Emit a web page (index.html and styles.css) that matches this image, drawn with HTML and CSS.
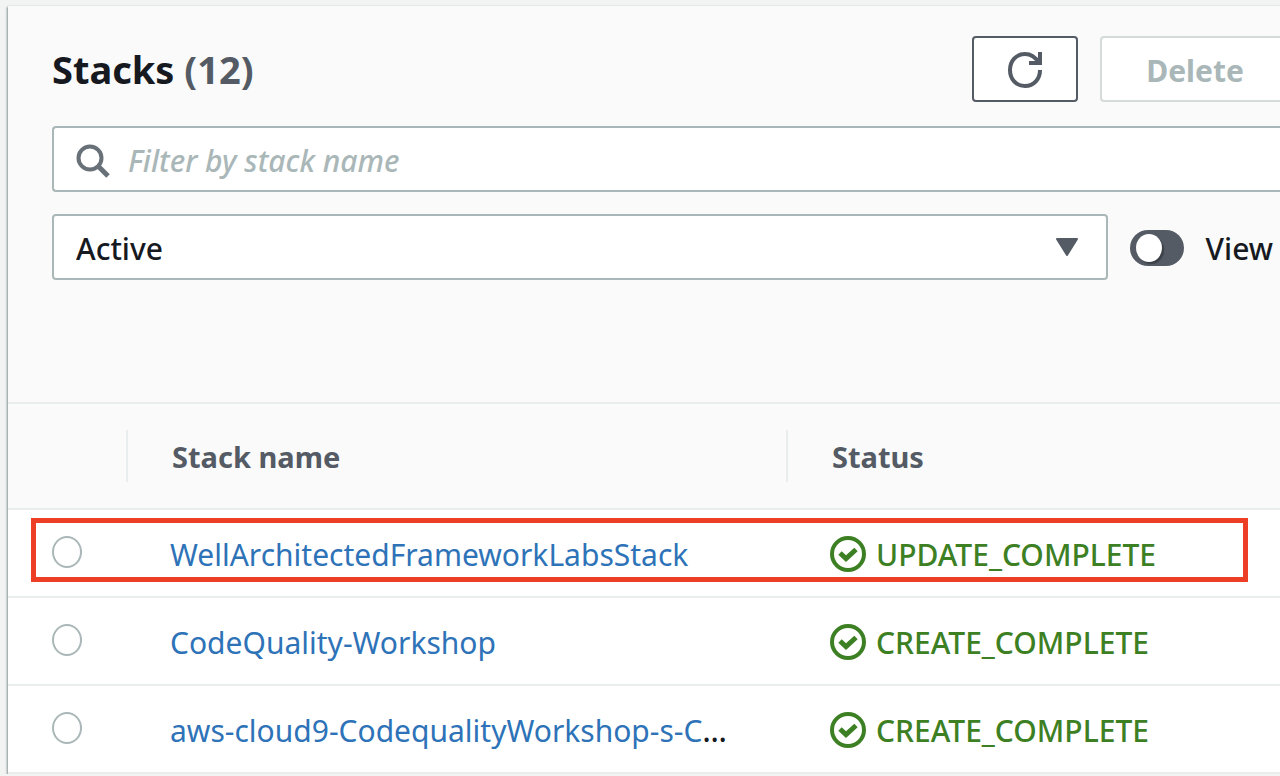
FILE: index.html
```html
<!DOCTYPE html>
<html lang="en">
<head>
<meta charset="utf-8">
<title>Stacks</title>
<link rel="stylesheet" href="styles.css">
</head>
<body>
<main class="panel">
  <header class="panel-header">
    <div class="title-row">
      <h1 class="title">Stacks <span class="count">(12)</span></h1>
      <div class="actions">
        <button class="button button-refresh" type="button" aria-label="Refresh">
          <svg class="icon" width="36" height="36" viewBox="0 0 36 36" fill="none" stroke="currentColor" stroke-width="4">
            <path d="M33 18C33 27 27 34 18 34C9 34 3 27 3 18C3 9 9 2 18 2C25 2 29 6 32 11"/>
            <path d="M33 0V11H22"/>
          </svg>
        </button>
        <button class="button button-delete" type="button" disabled>Delete</button>
      </div>
    </div>
    <div class="search">
      <svg class="search-icon" width="34" height="34" viewBox="0 0 34 34" fill="none" stroke="currentColor" stroke-width="4">
        <circle cx="14" cy="14" r="11.5"/>
        <path stroke-width="5" d="M22 22L32 32"/>
      </svg>
      <input class="search-input" type="text" placeholder="Filter by stack name" aria-label="Filter by stack name">
    </div>
    <div class="filter-row">
      <div class="select-wrap">
        <select class="select" aria-label="Stack status">
          <option>Active</option>
        </select>
        <svg class="caret" width="22" height="18" viewBox="0 0 22 18" fill="currentColor" stroke="currentColor" stroke-width="2" stroke-linejoin="round">
          <path d="M1 1H21L11 17Z"/>
        </svg>
      </div>
      <label class="toggle-label"><input class="toggle" type="checkbox">View</label>
    </div>
  </header>
  <table class="table">
    <colgroup><col class="col-radio"><col class="col-name"><col></colgroup>
    <thead>
      <tr><th scope="col" aria-label="Selection"></th><th scope="col">Stack name</th><th scope="col">Status</th></tr>
    </thead>
    <tbody>
      <tr class="highlighted">
        <td><input class="radio" type="radio" name="stack" aria-label="WellArchitectedFrameworkLabsStack"></td>
        <td><a class="link" href="#">WellArchitectedFrameworkLabsStack</a></td>
        <td><span class="status"><svg class="status-icon" width="36" height="36" viewBox="0 0 36 36" fill="none" stroke="currentColor" stroke-width="4"><circle cx="18" cy="18" r="16"/><path stroke-width="5" d="M10 17L16 22.5L26 13.5"/></svg>UPDATE_COMPLETE</span></td>
      </tr>
      <tr>
        <td><input class="radio" type="radio" name="stack" aria-label="CodeQuality-Workshop"></td>
        <td><a class="link" href="#">CodeQuality-Workshop</a></td>
        <td><span class="status"><svg class="status-icon" width="36" height="36" viewBox="0 0 36 36" fill="none" stroke="currentColor" stroke-width="4"><circle cx="18" cy="18" r="16"/><path stroke-width="5" d="M10 17L16 22.5L26 13.5"/></svg>CREATE_COMPLETE</span></td>
      </tr>
      <tr>
        <td><input class="radio" type="radio" name="stack" aria-label="aws-cloud9-CodequalityWorkshop-s-C"></td>
        <td><a class="link" href="#">aws-cloud9-CodequalityWorkshop-s-C</a>…</td>
        <td><span class="status"><svg class="status-icon" width="36" height="36" viewBox="0 0 36 36" fill="none" stroke="currentColor" stroke-width="4"><circle cx="18" cy="18" r="16"/><path stroke-width="5" d="M10 17L16 22.5L26 13.5"/></svg>CREATE_COMPLETE</span></td>
      </tr>
    </tbody>
  </table>
</main>
</body>
</html>
```
FILE: styles.css
```css
* {
  box-sizing: border-box;
}

body {
  margin: 0;
  padding: 6px 0 0 8px;
  background: #f2f3f3;
  color: #16191f;
  font-family: "Noto Sans", "Open Sans", sans-serif;
  font-size: 30px;
  font-weight: 500;
  line-height: 44px;
}

button,
input,
select {
  font: inherit;
  color: inherit;
}

.panel {
  background: #fff;
  box-shadow: -1px 1px 2px #879596, 0 -1px 1px #eaeded;
}

.panel-header {
  display: flex;
  flex-direction: column;
  gap: 22px;
  padding: 30px 0 122px 44px;
  background: #fafafa;
  border-bottom: 2px solid #eaeded;
}

.title-row {
  display: flex;
  align-items: center;
  justify-content: space-between;
  margin-bottom: 2px;
}

.title {
  margin: 0;
  font-size: 38px;
  font-weight: 700;
}

.count {
  color: #545b64;
}

.actions {
  display: flex;
  gap: 22px;
}

.button {
  display: flex;
  align-items: center;
  justify-content: center;
  height: 66px;
  background: #fff;
  border: 2px solid #545b64;
  border-radius: 4px;
  color: #545b64;
  font-weight: 700;
}

.button-refresh {
  width: 106px;
  padding: 2px 0 0;
}

.button-delete {
  width: 180px;
  padding: 4px 36px 0 44px;
  border-color: #d5dbdb;
  border-right: 0;
  border-radius: 4px 0 0 4px;
  color: #aab7b8;
}

.icon {
  display: block;
  flex: none;
}

.search {
  display: flex;
  align-items: center;
  gap: 18px;
  height: 66px;
  padding: 4px 0 0 22px;
  background: #fff;
  border: 2px solid #aab7b8;
  border-right: 0;
  border-radius: 4px 0 0 4px;
}

.search-icon {
  flex: none;
  color: #687078;
}

.search-input {
  flex: 1;
  min-width: 0;
  padding: 0;
  border: 0;
  outline: 0;
  background: none;
}

.search-input::placeholder {
  color: #aab7b8;
  font-style: italic;
  opacity: 1;
}

.filter-row {
  display: flex;
  align-items: center;
  gap: 22px;
  padding-right: 7px;
}

.select-wrap {
  position: relative;
  flex: 1;
}

.select {
  display: block;
  width: 100%;
  height: 66px;
  padding: 4px 60px 0 22px;
  appearance: none;
  background: #fff;
  border: 2px solid #aab7b8;
  border-radius: 4px;
}

.caret {
  position: absolute;
  top: 24px;
  right: 30px;
  color: #545b64;
  pointer-events: none;
}

.toggle-label {
  display: flex;
  align-items: center;
  gap: 22px;
  padding-top: 4px;
}

.toggle {
  display: flex;
  align-items: center;
  width: 54px;
  height: 36px;
  margin: 0 0 2px;
  padding: 0 6px;
  appearance: none;
  background: #545b64;
  border-radius: 18px;
}

.toggle::before {
  content: "";
  width: 26px;
  height: 28px;
  background: #fff;
  border-radius: 50%;
  box-shadow: 2px 2px 1px #3b4047;
}

.table {
  width: 100%;
  table-layout: fixed;
  border-collapse: separate;
  border-spacing: 0;
}

.col-radio {
  width: 120px;
}

.col-name {
  width: 660px;
}

th {
  position: relative;
  height: 106px;
  padding: 2px 44px 0;
  background: #fafafa;
  border-bottom: 2px solid #eaeded;
  color: #545b64;
  font-size: 29px;
  font-weight: 700;
  text-align: left;
}

th:not(:last-child)::after {
  content: "";
  position: absolute;
  top: 26px;
  bottom: 26px;
  right: 0;
  width: 2px;
  background: #eaeded;
}

td {
  height: 88px;
  padding: 4px 42px 0;
  border-bottom: 2px solid #eaeded;
  white-space: nowrap;
}

td:first-child {
  padding: 0 44px 2px;
}

.highlighted {
  position: relative;
}

.highlighted td:first-child::after {
  content: "";
  position: absolute;
  inset: 8px 32px 16px 23px;
  border: 5px solid #ed3f26;
  pointer-events: none;
}

.radio {
  display: block;
  width: 30px;
  height: 32px;
  margin: 0;
  appearance: none;
  background: #fff;
  border: 2px solid #aab7b8;
  border-radius: 50%;
}

.link {
  color: #2e73b8;
  font-weight: 400;
  text-decoration: none;
}

.status {
  display: flex;
  align-items: center;
  gap: 10px;
  color: #3d8024;
}

.status-icon {
  flex: none;
  margin-bottom: 2px;
}
```
